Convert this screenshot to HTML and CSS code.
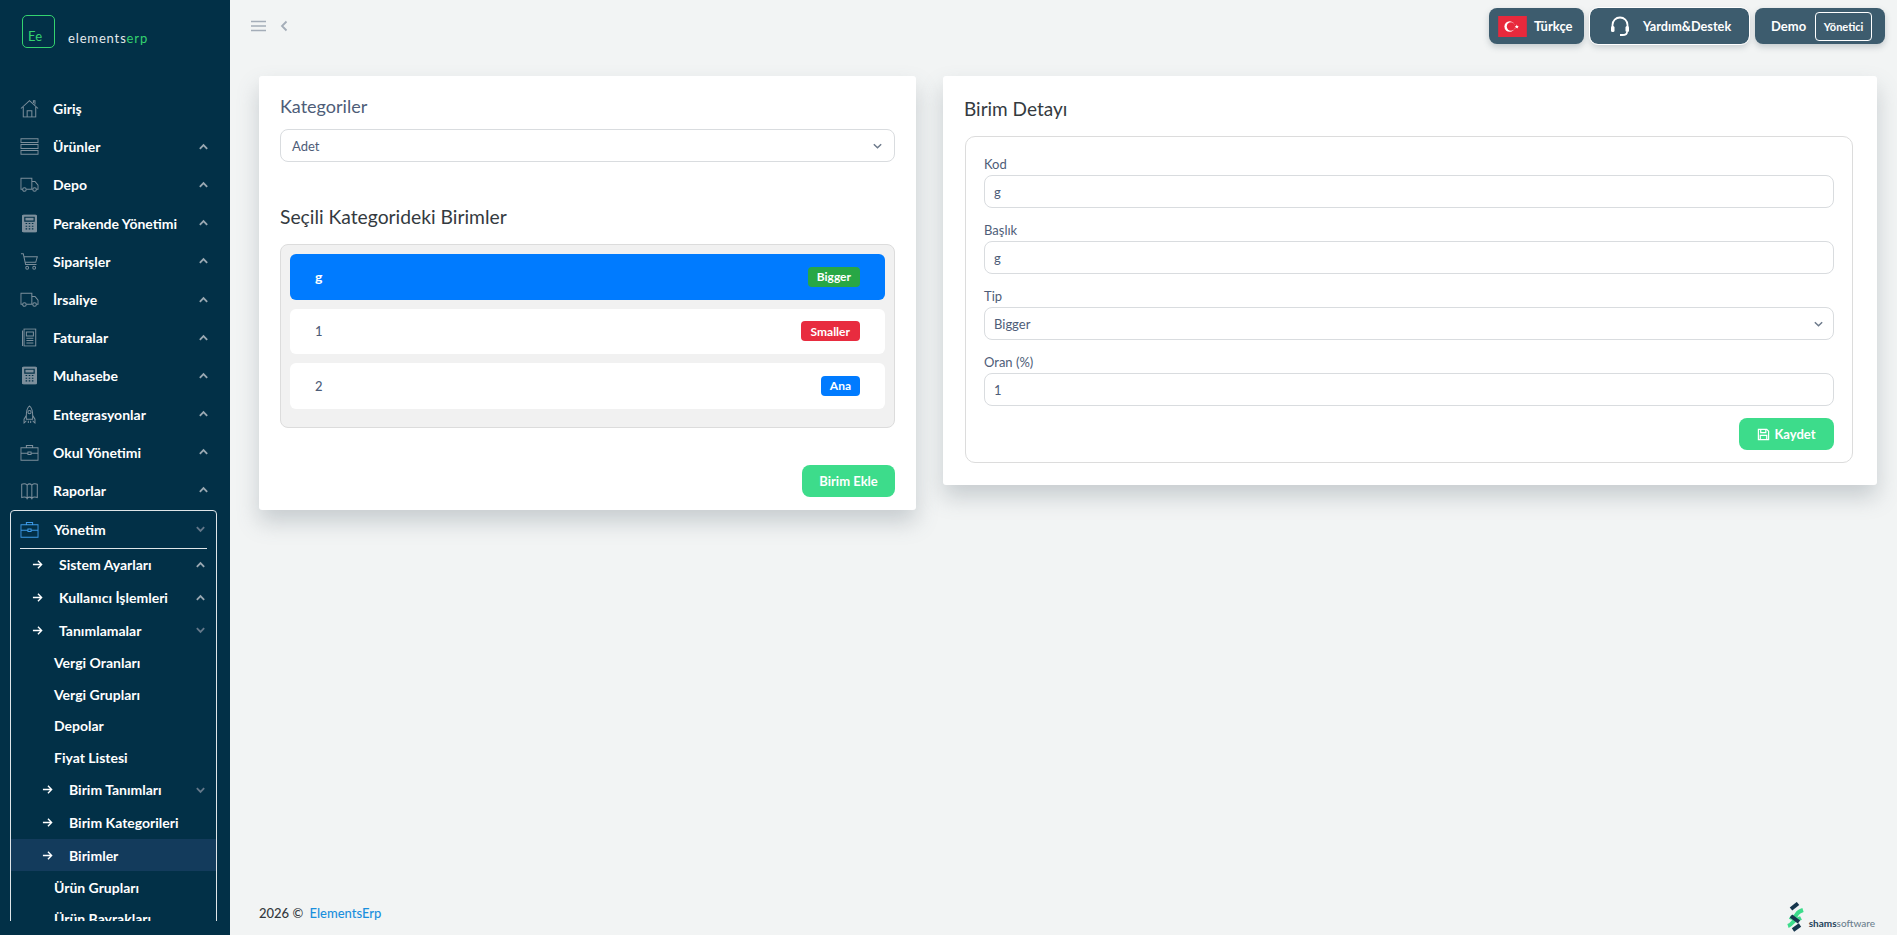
FILE: index.html
```html
<!DOCTYPE html>
<html lang="tr">
<head>
<meta charset="utf-8">
<title>Birimler</title>
<link rel="stylesheet" href="styles.css">
</head>
<body>
<svg class="defs" width="0" height="0">
  <defs>
    <symbol id="i-house" viewBox="0 0 24 24"><path d="M1 12 12 2l11 10M4 10v13h16V10M9 23v-8h6v8M17 5V2h2v5"/></symbol>
    <symbol id="i-rows" viewBox="0 0 24 24"><path d="M1 2h22v5H1zM1 9.500h22v5H1zM1 17h22v5H1z"/></symbol>
    <symbol id="i-truck" viewBox="0 0 24 24"><path d="M3 18H1V4h14v14H8M15 8h4l4 5v5h-2M15 18h1"/><circle cx="5.500" cy="18.500" r="2.300"/><circle cx="18.500" cy="18.500" r="2.300"/></symbol>
    <symbol id="i-calc" viewBox="0 0 24 24"><rect x="3" y="1" width="18" height="22" rx="1.500" class="fill"/><path d="M6 4h12v5H6z" class="cut"/><path d="M7 12h2M11 12h2M15 12h2M7 15.500h2M11 15.500h2M15 15.500h2M7 19h2M11 19h2M15 19h2" class="cut"/></symbol>
    <symbol id="i-cart" viewBox="0 0 24 24"><path d="M1 2h3l3 14h14M5 6h17l-2 7H7"/><circle cx="9" cy="20" r="1.800"/><circle cx="18" cy="20" r="1.800"/></symbol>
    <symbol id="i-book" viewBox="0 0 24 24"><path d="M5 1h15v22H5zM3 3v20M8 5h9v5H8zM8 13h9M8 16h9M8 19h9"/></symbol>
    <symbol id="i-rocket" viewBox="0 0 24 24"><path d="M12 1c4 3 4.500 8 4 17H8C7.500 9 8 4 12 1zM8 13l-3 5v5l3-3M16 13l3 5v5l-3-3M10.500 20v3M13.500 20v3"/><circle cx="12" cy="9" r="2"/></symbol>
    <symbol id="i-case" viewBox="0 0 24 24"><path d="M1 6h22v16H1zM8 6V3h8v3M1 13h9M14 13h9M10 11.500h4v3h-4z"/></symbol>
    <symbol id="i-map" viewBox="0 0 24 24"><path d="M2 4c3-1 5-1 7 1v17c-2-2-4-2-7-1zM9 5c2-2 4-2 6 0v17c-2-2-4-2-6 0zM15 5c2-2 4-2 7-1v17c-3-1-5-1-7 1z"/></symbol>
    <symbol id="i-up" viewBox="0 0 12 8"><path d="M2 6l4-4 4 4"/></symbol>
    <symbol id="i-down" viewBox="0 0 12 8"><path d="M2 2l4 4 4-4"/></symbol>
    <symbol id="i-arrow" viewBox="0 0 12 12"><path d="M1 6h9.500M6.500 2l4 4-4 4"/></symbol>
  </defs>
</svg>

<aside class="sidebar">
  <div class="brand">
    <span class="brand-mark">Ee</span>
    <span class="brand-name">elements<em>erp</em></span>
  </div>
  <nav class="menu">
    <a class="item"><svg class="ico"><use href="#i-house"/></svg><span>Giriş</span></a>
    <a class="item"><svg class="ico"><use href="#i-rows"/></svg><span>Ürünler</span><svg class="chev"><use href="#i-up"/></svg></a>
    <a class="item"><svg class="ico"><use href="#i-truck"/></svg><span>Depo</span><svg class="chev"><use href="#i-up"/></svg></a>
    <a class="item"><svg class="ico"><use href="#i-calc"/></svg><span>Perakende Yönetimi</span><svg class="chev"><use href="#i-up"/></svg></a>
    <a class="item"><svg class="ico"><use href="#i-cart"/></svg><span>Siparişler</span><svg class="chev"><use href="#i-up"/></svg></a>
    <a class="item"><svg class="ico"><use href="#i-truck"/></svg><span>İrsaliye</span><svg class="chev"><use href="#i-up"/></svg></a>
    <a class="item"><svg class="ico"><use href="#i-book"/></svg><span>Faturalar</span><svg class="chev"><use href="#i-up"/></svg></a>
    <a class="item"><svg class="ico"><use href="#i-calc"/></svg><span>Muhasebe</span><svg class="chev"><use href="#i-up"/></svg></a>
    <a class="item"><svg class="ico"><use href="#i-rocket"/></svg><span>Entegrasyonlar</span><svg class="chev"><use href="#i-up"/></svg></a>
    <a class="item"><svg class="ico"><use href="#i-case"/></svg><span>Okul Yönetimi</span><svg class="chev"><use href="#i-up"/></svg></a>
    <a class="item"><svg class="ico"><use href="#i-map"/></svg><span>Raporlar</span><svg class="chev"><use href="#i-up"/></svg></a>
    <div class="group">
      <a class="item item-open"><svg class="ico ico-active"><use href="#i-case"/></svg><span>Yönetim</span><svg class="chev chev-dim"><use href="#i-down"/></svg></a>
      <a class="sub"><svg class="arrow"><use href="#i-arrow"/></svg><span>Sistem Ayarları</span><svg class="chev"><use href="#i-up"/></svg></a>
      <a class="sub"><svg class="arrow"><use href="#i-arrow"/></svg><span>Kullanıcı İşlemleri</span><svg class="chev"><use href="#i-up"/></svg></a>
      <a class="sub"><svg class="arrow"><use href="#i-arrow"/></svg><span>Tanımlamalar</span><svg class="chev chev-dim"><use href="#i-down"/></svg></a>
      <a class="leaf">Vergi Oranları</a>
      <a class="leaf">Vergi Grupları</a>
      <a class="leaf">Depolar</a>
      <a class="leaf">Fiyat Listesi</a>
      <a class="sub sub2"><svg class="arrow"><use href="#i-arrow"/></svg><span>Birim Tanımları</span><svg class="chev chev-dim"><use href="#i-down"/></svg></a>
      <a class="sub sub2"><svg class="arrow"><use href="#i-arrow"/></svg><span>Birim Kategorileri</span></a>
      <a class="sub sub2 current"><svg class="arrow"><use href="#i-arrow"/></svg><span>Birimler</span></a>
      <a class="leaf">Ürün Grupları</a>
      <a class="leaf">Ürün Bayrakları</a>
    </div>
  </nav>
</aside>

<div class="main">
  <header class="topbar">
    <div class="top-left">
      <svg class="burger" viewBox="0 0 15 12"><path d="M0 1.500h15M0 6h15M0 10.500h15"/></svg>
      <svg class="back" viewBox="0 0 8 12"><path d="M6.500 1.500 2 6l4.500 4.500"/></svg>
    </div>
    <div class="top-right">
      <button class="top-btn btn-lang">
        <svg class="flag" viewBox="0 0 30 22"><rect width="30" height="22" fill="#e8293c"/><circle cx="12" cy="11" r="5.500" fill="#fff"/><circle cx="13.400" cy="11" r="4.400" fill="#e8293c"/><path d="M19.500 9l.6 1.500 1.600.1-1.200 1 .4 1.600-1.400-.9-1.400.9.400-1.600-1.200-1 1.600-.1z" fill="#fff"/></svg>
        Türkçe
      </button>
      <button class="top-btn btn-help">
        <svg class="headset" viewBox="0 0 20 20"><path d="M2.500 12V9a7.500 7.500 0 0 1 15 0v3"/><rect x="1" y="10" width="3.500" height="6" rx="1.500" class="solid"/><rect x="15.500" y="10" width="3.500" height="6" rx="1.500" class="solid"/><path d="M17 16c0 2-2 3-4.500 3H10"/></svg>
        Yardım&amp;Destek
      </button>
      <button class="top-btn btn-user">Demo <span class="role">Yönetici</span></button>
    </div>
  </header>

  <main class="content">
    <section class="card card-left">
      <h4 class="cat-title">Kategoriler</h4>
      <div class="field select">Adet<svg class="sel-chev"><use href="#i-down"/></svg></div>
      <h3 class="list-title">Seçili Kategorideki Birimler</h3>
      <div class="list">
        <div class="row row-active"><span>g</span><span class="badge green">Bigger</span></div>
        <div class="row"><span>1</span><span class="badge red">Smaller</span></div>
        <div class="row"><span>2</span><span class="badge blue">Ana</span></div>
      </div>
      <div class="actions actions-left"><button class="btn-green btn-add">Birim Ekle</button></div>
    </section>

    <section class="card card-right">
      <h3 class="detail-title">Birim Detayı</h3>
      <div class="panel">
        <label class="lbl">Kod</label>
        <div class="field">g</div>
        <label class="lbl">Başlık</label>
        <div class="field">g</div>
        <label class="lbl">Tip</label>
        <div class="field select">Bigger<svg class="sel-chev"><use href="#i-down"/></svg></div>
        <label class="lbl">Oran (%)</label>
        <div class="field">1</div>
        <div class="actions">
          <button class="btn-green btn-save">
            <svg class="save" viewBox="0 0 14 14"><path d="M1.500 1.500h9l2 2v9h-11zM4 1.500v3.500h5.500V1.500M3.500 12.500V8h7v4.500"/></svg>
            Kaydet
          </button>
        </div>
      </div>
    </section>
  </main>

  <footer class="footer">
    <div>2026 © <a class="foot-link">ElementsErp</a></div>
    <div class="shams">
      <svg class="shams-mark" viewBox="0 0 20 30">
        <path d="M4 7 11 1.500" class="dark"/><path d="M3 15c3 2 6-1 7-3s3-3 6-4" class="mint"/><path d="M1 24c3-1 4-3 6-5s5-2 7-3" class="mint"/><path d="M4 14l8 6M6 28l7-5" class="dark"/>
      </svg>
      <span class="shams-name"><b>shams</b>software</span>
    </div>
  </footer>
</div>
</body>
</html>
```
FILE: styles.css
```css
* { box-sizing: border-box; }
html, body { margin: 0; height: 100%; }
body {
  display: flex;
  height: 935px;
  overflow: hidden;
  background: #f2f4f4;
  font-family: "Lato", "Noto Sans", sans-serif;
  font-size: 13px;
  color: #4e5d78;
}
.defs { position: absolute; }
h3, h4 { margin: 0; font-weight: 400; }
button { font-family: inherit; border: 0; cursor: pointer; }

/* sidebar */
.sidebar {
  width: 230px;
  flex: none;
  background: #023047;
  color: #fff;
  display: flex;
  flex-direction: column;
}
.brand {
  height: 90px;
  flex: none;
  display: flex;
  align-items: flex-start;
  padding: 15px 0 0 22px;
}
.brand-mark {
  width: 33px;
  height: 33px;
  border: 1.500px solid #34d26f;
  border-radius: 5px;
  color: #34d26f;
  font-size: 13px;
  display: flex;
  align-items: flex-end;
  padding: 0 0 4px 5px;
  line-height: 14px;
}
.brand-name {
  margin: 14px 0 0 13px;
  font-size: 13px;
  line-height: 18px;
  letter-spacing: .85px;
  color: #e4e9ec;
}
.brand-name em { font-style: normal; color: #34d26f; }
.menu {
  height: 831px;
  margin-top: -.5px;
  overflow: hidden;
  flex: none;
  font-size: 14px;
  font-weight: 700;
}
.item {
  height: 38.200px;
  display: flex;
  align-items: center;
  padding: 0 21px 0 21px;
}
.item span, .sub span { flex: 1; }
.ico {
  width: 17px;
  height: 17px;
  margin: 0 15px 0 0;
  flex: none;
  fill: none;
  stroke: #7d8f9c;
  stroke-width: 1.300;
  overflow: visible;
  transform: scale(1.100);
}
.fill { fill: #7d8f9c; stroke: #7d8f9c; }
.cut { stroke: #023047; stroke-width: 1.500; fill: none; }
.ico-active { stroke: #3d9ae8; }
.chev {
  width: 11px;
  height: 8px;
  flex: none;
  fill: none;
  stroke: #9aa8b2;
  stroke-width: 2;
}
.chev-dim { stroke: #64788a; }
.group {
  margin: 0 13px 0 10px;
  border: 1px solid #dfe5e8;
  border-radius: 4px;
  height: 430px;
}
.group .ico { margin-right: 16px; }
.sub {
  height: 32.700px;
  display: flex;
  align-items: center;
  padding: 0 10px 0 21px;
  font-size: 14px;
}
.group .item-open { height: 37px; box-shadow: 0 1px 0 #dfe5e8; margin: 0 9px 1px; padding: 0 1px; }
.arrow {
  width: 11px;
  height: 11px;
  flex: none;
  margin-right: 16px;
  fill: none;
  stroke: #fff;
  stroke-width: 1.500;
}
.sub2 { padding-left: 31px; }
.current { background: #133b5c; }
.leaf {
  height: 31.700px;
  display: flex;
  align-items: center;
  padding-left: 43px;
}

/* main */
.main {
  flex: 1;
  min-width: 0;
  display: flex;
  flex-direction: column;
}
.topbar {
  height: 76px;
  flex: none;
  display: flex;
  justify-content: space-between;
  align-items: flex-start;
  padding: 8px 12px 0 21px;
}
.top-left { display: flex; align-items: center; gap: 14px; height: 34px; margin-top: -8px; padding-top: 17px; }
.burger { width: 15px; height: 12px; fill: none; stroke: #a4adb8; stroke-width: 1.500; }
.back { width: 8px; height: 12px; fill: none; stroke: #a4adb8; stroke-width: 1.800; }
.top-right { display: flex; gap: 6px; }
.top-btn {
  height: 36px;
  border-radius: 8px;
  background: #3d5c6e;
  color: #fff;
  font-size: 13px;
  font-weight: 700;
  display: flex;
  align-items: center;
  box-shadow: 0 3px 6px rgba(60, 80, 90, .25);
}
.btn-lang { width: 95px; padding: 0 0 0 9px; gap: 7px; }
.flag { width: 29px; height: 21px; }
.btn-help { width: 159px; padding: 0 0 0 20px; gap: 13px; outline: 1px solid #fff; font-size: 12.700px; }
.headset { width: 20px; height: 20px; fill: none; stroke: #fff; stroke-width: 1.800; }
.headset .solid { fill: #fff; stroke: none; }
.btn-user { width: 130px; padding: 0 0 0 16px; gap: 9px; }
.role {
  width: 57px;
  height: 29px;
  border: 1px solid #fff;
  border-radius: 4px;
  font-size: 11px;
  display: flex;
  align-items: center;
  justify-content: center;
}

.content {
  flex: 1;
  display: grid;
  grid-template-columns: 657px 1fr;
  gap: 27px;
  align-items: start;
  padding: 0 20px 0 29px;
}
.card {
  background: #fff;
  border-radius: 3px;
  box-shadow: 0 12px 22px rgba(90, 105, 115, .28);
  padding: 21px;
}
.card-left { height: 434px; }
.cat-title { font-size: 18px; line-height: 22px; margin-top: -2px; color: #4e5d78; }
.field {
  height: 33px;
  border: 1px solid #d9dcdf;
  border-radius: 8px;
  background: #fff;
  padding: 0 11px;
  display: flex;
  align-items: center;
  justify-content: space-between;
  font-size: 13px;
  color: #4e5d78;
}
.card-left .select { margin-top: 12px; }
.sel-chev { width: 11px; height: 8px; fill: none; stroke: #6d7a8b; stroke-width: 1.600; }
.list-title { font-size: 19.300px; line-height: 26px; margin-top: 42px; color: #343a40; }
.list {
  margin-top: 14px;
  height: 184px;
  background: #f1f1f1;
  border: 1px solid #dcdcdc;
  border-radius: 8px;
  padding: 9px;
  display: flex;
  flex-direction: column;
  gap: 9px;
}
.row {
  height: 45.500px;
  background: #fff;
  border-radius: 6px;
  display: flex;
  align-items: center;
  justify-content: space-between;
  padding: 0 25px;
  font-size: 13px;
  font-weight: 500;
}
.row-active { background: #007bff; color: #fff; font-weight: 700; font-size: 14px; }
.badge {
  height: 20px;
  padding: 0 9px;
  border-radius: 4px;
  color: #fff;
  font-size: 12px;
  font-weight: 700;
  display: flex;
  align-items: center;
}
.green { background: #28a745; }
.red { background: #e82c3f; padding: 0 10px; }
.blue { background: #007bff; }
.actions { display: flex; justify-content: flex-end; }
.actions-left { margin-top: 37px; }
.btn-green {
  background: #3ddc8b;
  color: #fff;
  height: 32px;
  border-radius: 8px;
  font-size: 13px;
  font-weight: 700;
  display: flex;
  align-items: center;
  justify-content: center;
  gap: 4px;
}
.btn-add { width: 93px; }
.btn-save { width: 95px; }
.save { width: 13px; height: 13px; fill: none; stroke: #fff; stroke-width: 1.300; }

.card-right { height: 409px; padding: 20px 24px 0 21px; }
.detail-title { font-size: 19px; line-height: 26px; color: #343a40; }
.panel {
  margin-top: 14px;
  margin-left: 1px;
  height: 327px;
  border: 1px solid #dcdcdc;
  border-radius: 10px;
  padding: 17px 18px 0 18px;
}
.lbl { display: block; height: 20px; line-height: 20px; font-size: 13px; margin-bottom: 1px; }
.panel .field { margin-bottom: 12px; height: 33px; padding: 0 9px; }
.panel .actions { margin-top: 12px; }

.footer {
  height: 60px;
  flex: none;
  display: flex;
  justify-content: space-between;
  align-items: center;
  padding: 15px 22px 0 29px;
  color: #343a40;
  font-size: 13px;
  font-weight: 500;
}
.foot-link { color: #1a8fdd; margin-left: 3px; }
.shams { display: flex; align-items: flex-end; gap: 2px; margin-top: 8px; }
.shams-mark { width: 20px; height: 30px; fill: none; stroke-width: 4; }
.dark { stroke: #16364d; }
.mint { stroke: #3ddc8b; }
.shams-name { font-size: 10px; line-height: 14px; margin-bottom: 2px; color: #6c7f8e; font-weight: 500; }
.shams-name b { color: #24425a; }
```
